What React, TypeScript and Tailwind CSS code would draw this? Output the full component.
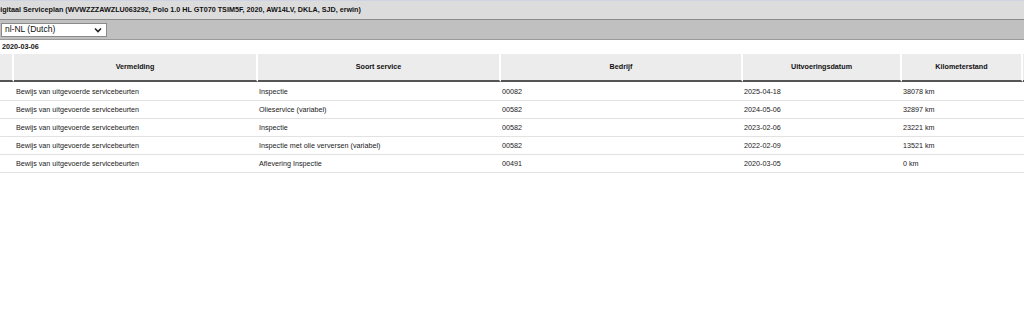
const rows = [
  ["Bewijs van uitgevoerde servicebeurten", "Inspectie", "00082", "2025-04-18", "38078 km"],
  ["Bewijs van uitgevoerde servicebeurten", "Olieservice (variabel)", "00582", "2024-05-06", "32897 km"],
  ["Bewijs van uitgevoerde servicebeurten", "Inspectie", "00582", "2023-02-06", "23221 km"],
  ["Bewijs van uitgevoerde servicebeurten", "Inspectie met olie verversen (variabel)", "00582", "2022-02-09", "13521 km"],
  ["Bewijs van uitgevoerde servicebeurten", "Aflevering Inspectie", "00491", "2020-03-05", "0 km"],
];

const headers = ["Vermelding", "Soort service", "Bedrijf", "Uitvoeringsdatum", "Kilometerstand"];

export default function App() {
  return (
    <div className="w-[1024px] h-[317px] overflow-hidden bg-white font-['Liberation_Sans',Arial,sans-serif] text-[7.2px] text-[#1a1a1a] antialiased">
      <div className="h-[20px] border-t border-[#cfd3e3] border-b border-b-[#8a8a8a] bg-[#dcdcdc] flex items-center overflow-hidden">
        <span className="font-bold -ml-[5px] whitespace-nowrap text-[#111]">
          Digitaal Serviceplan (WVWZZZAWZLU063292, Polo 1.0 HL GT070 TSIM5F, 2020, AW14LV, DKLA, SJD, erwin)
        </span>
      </div>
      <div className="h-[20px] bg-[#c0c0c0] border-b border-[#9a9a9a] flex items-center">
        <div className="ml-px w-[106px] h-[14px] bg-white border border-[#8a8a8a] flex items-center justify-between pl-[3px] pr-[4px] text-[8.5px] text-[#111]">
          <span>nl-NL (Dutch)</span>
          <svg width="8" height="6" viewBox="0 0 8 6">
            <path d="M1 1.5 L4 4.5 L7 1.5" fill="none" stroke="#222" strokeWidth="1.6" />
          </svg>
        </div>
      </div>
      <div className="h-[14px] flex items-center pt-[1px] pl-[2px] font-bold text-[#111]">2020-03-06</div>
      <div className="w-[1024px] overflow-hidden">
        <table className="w-[1053px] border-separate border-spacing-0 table-fixed">
          <colgroup>
            <col className="w-[14px]" />
            <col className="w-[244px]" />
            <col className="w-[243px]" />
            <col className="w-[242px]" />
            <col className="w-[159px]" />
            <col className="w-[121px]" />
            <col className="w-[30px]" />
          </colgroup>
          <thead>
            <tr>
              <th className="h-[28px] bg-[#ececec] border-b-2 border-b-[#555] border-r-2 border-r-white p-0" />
              {headers.map((h) => (
                <th
                  key={h}
                  className="h-[28px] bg-[#ececec] border-b-2 border-b-[#555] border-r-2 border-r-white p-0 font-bold text-center text-[#111]"
                >
                  {h}
                </th>
              ))}
              <th className="h-[28px] bg-[#ececec] border-b-2 border-b-[#555] p-0" />
            </tr>
          </thead>
          <tbody>
            {rows.map((r, ri) => (
              <tr key={ri} className={ri === 0 ? "h-[19px]" : "h-[18px]"}>
                <td className="border-b border-[#e2e2e2] p-0" />
                {r.map((c, ci) => (
                  <td
                    key={ci}
                    className={`border-b border-[#e2e2e2] p-0 pt-[2px] text-left whitespace-nowrap ${ci === 0 ? "pl-[2px]" : "pl-[1px]"}`}
                  >
                    {c}
                  </td>
                ))}
                <td className="border-b border-[#e2e2e2] p-0" />
              </tr>
            ))}
          </tbody>
        </table>
      </div>
    </div>
  );
}
